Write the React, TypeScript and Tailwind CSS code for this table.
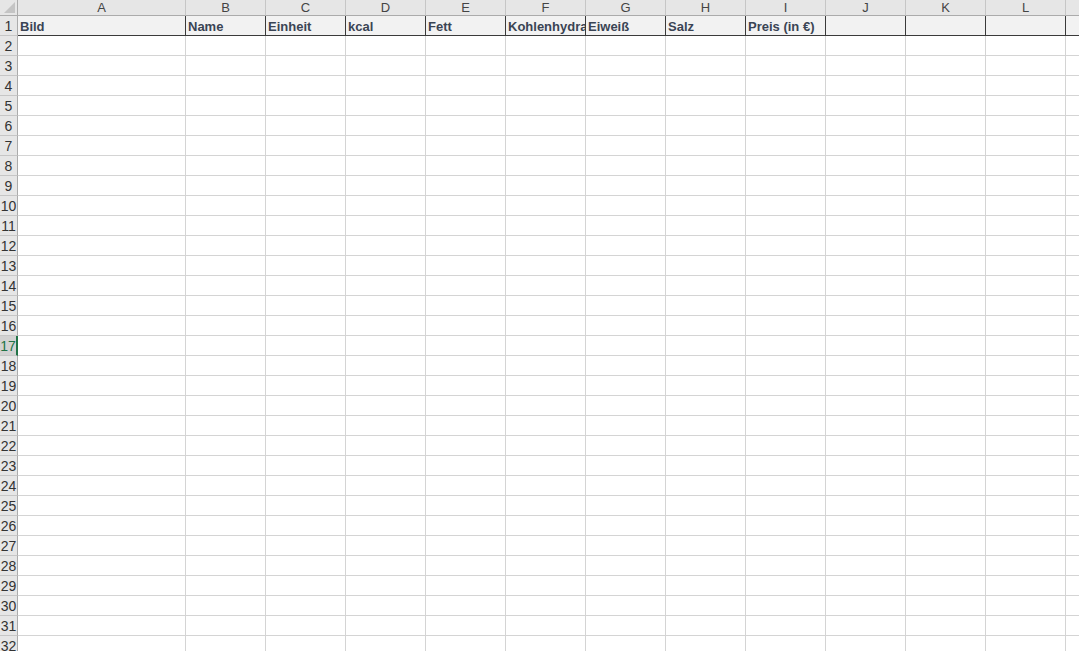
const columns = ['A', 'B', 'C', 'D', 'E', 'F', 'G', 'H', 'I', 'J', 'K', 'L', '']
const widths = [168, 80, 80, 80, 80, 80, 80, 80, 80, 80, 80, 80, 80]
const headers = ['Bild', 'Name', 'Einheit', 'kcal', 'Fett', 'Kohlenhydrate', 'Eiweiß', 'Salz', 'Preis (in €)', '', '', '', '']
const rows = Array.from({ length: 31 }, (_, i) => i + 2)

const font = { fontFamily: '"Liberation Sans", Arial, sans-serif' }

export default function App() {
  return (
    <div className="h-[651px] w-[1079px] overflow-hidden bg-white" style={font}>
      {/* column letters */}
      <div className="flex h-[16px]">
        <div className="relative h-[16px] w-[18px] shrink-0 border-r border-b border-[#ababab] bg-[#e6e6e6]">
          <svg className="absolute right-[2px] bottom-[2px]" width="11" height="11" viewBox="0 0 11 11">
            <polygon points="11,0 11,11 0,11" fill="#c4c4c4" />
          </svg>
        </div>
        {columns.map((c, i) => (
          <div
            key={i}
            className="flex h-[16px] shrink-0 items-center justify-center border-r border-b border-r-[#c6c6c6] border-b-[#ababab] bg-[#e6e6e6] text-[13px] leading-none text-[#444]"
            style={{ width: widths[i] }}
          >
            {c}
          </div>
        ))}
      </div>

      {/* row 1 - table headers */}
      <div className="flex h-[20px]">
        <div className="flex h-[20px] w-[18px] shrink-0 items-center justify-center border-r border-b border-r-[#ababab] border-b-[#c6c6c6] bg-[#e6e6e6] text-[14px] leading-none text-[#333]">
          1
        </div>
        {headers.map((h, i) => (
          <div
            key={i}
            className="flex h-[20px] shrink-0 items-end overflow-hidden whitespace-nowrap border-r border-b border-[#3a3a3a] bg-[#f2f2f2] pb-[2px] pl-[2px] text-[13px] leading-none font-bold text-[#3a4454]"
            style={{ width: widths[i] }}
          >
            {h}
          </div>
        ))}
      </div>

      {/* empty rows */}
      {rows.map(r => (
        <div key={r} className="flex h-[20px]">
          <div
            className={
              r === 17
                ? 'flex h-[20px] w-[18px] shrink-0 items-center justify-center border-r-2 border-b border-r-[#217346] border-b-[#c6c6c6] bg-[#d2d2d2] text-[14px] leading-none text-[#217346]'
                : 'flex h-[20px] w-[18px] shrink-0 items-center justify-center border-r border-b border-r-[#ababab] border-b-[#c6c6c6] bg-[#e6e6e6] text-[14px] leading-none text-[#333]'
            }
          >
            <span className="whitespace-nowrap">{r}</span>
          </div>
          {widths.map((w, i) => (
            <div key={i} className="h-[20px] shrink-0 border-r border-b border-[#d4d4d4]" style={{ width: w }} />
          ))}
        </div>
      ))}
    </div>
  )
}
